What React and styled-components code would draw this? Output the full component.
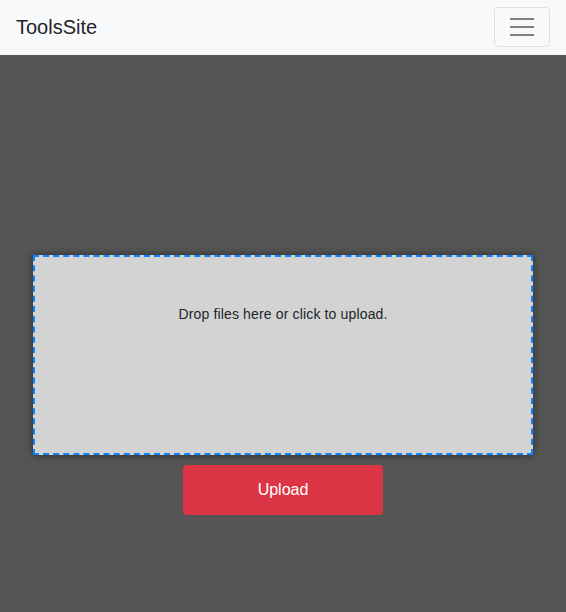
import React from "react";
import styled, { createGlobalStyle } from "styled-components";

const Global = createGlobalStyle`
  html, body { margin: 0; padding: 0; }
  body {
    background: #555555;
    font-family: "Liberation Sans", Arial, sans-serif;
    color: #212529;
    min-height: 612px;
  }
`;

const Navbar = styled.nav`
  height: 55px;
  box-sizing: border-box;
  background: #f8f9fa;
  display: flex;
  align-items: center;
  justify-content: space-between;
  padding: 0 16px;
`;

const Brand = styled.a`
  font-size: 20px;
  color: #212529;
  text-decoration: none;
`;

const Toggler = styled.button`
  width: 56px;
  height: 40px;
  box-sizing: border-box;
  margin-top: -1px;
  border: 1px solid #dfe0e1;
  border-radius: 4px;
  background: transparent;
  display: flex;
  flex-direction: column;
  align-items: center;
  justify-content: center;
  gap: 6px;
  padding: 0;
`;

const Bar = styled.span`
  display: block;
  width: 24px;
  height: 2px;
  background: #808080;
`;

const Main = styled.main`
  display: flex;
  flex-direction: column;
  align-items: center;
  padding-top: 200px;
  gap: 10px;
`;

const DropZone = styled.div`
  width: 500px;
  height: 200px;
  box-sizing: border-box;
  background: #d3d3d3;
  border: 2px dashed #0a84ff;
  box-shadow: 0 0 8px rgba(0, 0, 0, 0.5);
  display: flex;
  justify-content: center;
  padding-top: 49px;
  font-size: 14px;
  letter-spacing: 0.15px;
  color: #212529;
  cursor: pointer;
`;

const UploadButton = styled.button`
  width: 200px;
  height: 50px;
  background: #dc3545;
  color: #ffffff;
  border: none;
  border-radius: 4px;
  font-family: "Liberation Sans", Arial, sans-serif;
  font-size: 16px;
  cursor: pointer;
`;

export default function App() {
  return (
    <>
      <Global />
      <Navbar>
        <Brand href="#">ToolsSite</Brand>
        <Toggler aria-label="Toggle navigation">
          <Bar />
          <Bar />
          <Bar />
        </Toggler>
      </Navbar>
      <Main>
        <DropZone>Drop files here or click to upload.</DropZone>
        <UploadButton>Upload</UploadButton>
      </Main>
    </>
  );
}
